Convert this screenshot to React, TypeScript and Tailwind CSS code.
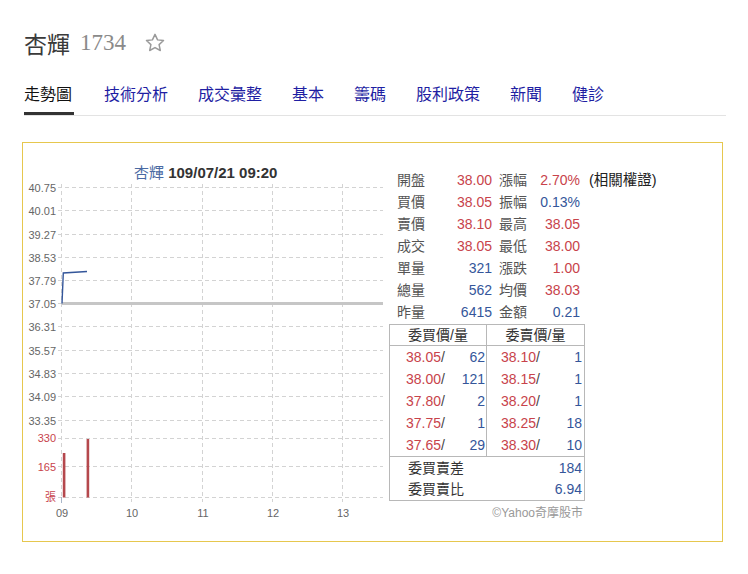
import React from "react";

const RED = "#c8434b";
const BLUE = "#34569a";

type Cell = [string, string, "r" | "b"];
const info: [Cell, Cell][] = [
  [["開盤", "38.00", "r"], ["漲幅", "2.70%", "r"]],
  [["買價", "38.05", "r"], ["振幅", "0.13%", "b"]],
  [["賣價", "38.10", "r"], ["最高", "38.05", "r"]],
  [["成交", "38.05", "r"], ["最低", "38.00", "r"]],
  [["單量", "321", "b"], ["漲跌", "1.00", "r"]],
  [["總量", "562", "b"], ["均價", "38.03", "r"]],
  [["昨量", "6415", "b"], ["金額", "0.21", "b"]],
];

const bids = [
  ["38.05", "62"],
  ["38.00", "121"],
  ["37.80", "2"],
  ["37.75", "1"],
  ["37.65", "29"],
];
const asks = [
  ["38.10", "1"],
  ["38.15", "1"],
  ["38.20", "1"],
  ["38.25", "18"],
  ["38.30", "10"],
];

const tabs = ["走勢圖", "技術分析", "成交彙整", "基本", "籌碼", "股利政策", "新聞", "健診"];

const priceLabels = ["40.75", "40.01", "39.27", "38.53", "37.79", "37.05", "36.31", "35.57", "34.83", "34.09", "33.35"];
const priceYs = [187.5, 210.5, 234.5, 257.5, 280.5, 303.5, 326.5, 350.5, 373.5, 396.5, 420.5];
const volLines = [438.5, 466.5, 497.5];
const vxs = [61.5, 131.5, 202.5, 272.5, 342.5];
const xLabels = ["09", "10", "11", "12", "13"];

function Chart() {
  return (
    <svg width={366} height={398} viewBox="23 143 366 398" className="block shrink-0">
      <text x={134} y={177.5} fontSize={15} fontFamily="'Liberation Sans','Noto Sans CJK TC',sans-serif">
        <tspan fill="#4a6aa3">杏輝</tspan>
        <tspan fill="#333" fontWeight="bold" fontSize={15}> 109/07/21 09:20</tspan>
      </text>
      {[...priceYs, ...volLines].map((y, i) => (
        <line key={"h" + i} x1={58} x2={383} y1={y} y2={y} stroke="#d3d3d3" strokeWidth={1} strokeDasharray="4 3" />
      ))}
      {vxs.map((x, i) => (
        <line key={"v" + i} x1={x} x2={x} y1={184} y2={502} stroke="#d3d3d3" strokeWidth={1} strokeDasharray="4 3" />
      ))}
      <line x1={61.5} x2={61.5} y1={497} y2={503} stroke="#a9b6c8" strokeWidth={1} />
      {priceLabels.map((t, i) => (
        <text key={"pl" + i} x={56} y={priceYs[i] + 4} fontSize={11} fill="#666" textAnchor="end" fontFamily="'Liberation Sans',sans-serif">
          {t}
        </text>
      ))}
      <text x={56} y={442} fontSize={11} fill={RED} textAnchor="end" fontFamily="'Liberation Sans',sans-serif">330</text>
      <text x={56} y={470.5} fontSize={11} fill={RED} textAnchor="end" fontFamily="'Liberation Sans',sans-serif">165</text>
      <text x={56} y={501} fontSize={11} fill={RED} textAnchor="end" fontFamily="'Noto Sans CJK TC',sans-serif">張</text>
      {xLabels.map((t, i) => (
        <text key={"xl" + i} x={vxs[i] + 0.5} y={516.5} fontSize={11} fill="#666" textAnchor="middle" fontFamily="'Liberation Sans',sans-serif">
          {t}
        </text>
      ))}
      <line x1={62} x2={383} y1={303.5} y2={303.5} stroke="#c6c6c6" strokeWidth={3} />
      <polyline points="62,303.5 63.3,273 87,271.5" fill="none" stroke={BLUE} strokeWidth={1.4} />
      <rect x={62.8} y={453} width={2.6} height={44.5} fill="#b5484d" />
      <rect x={86.6} y={439} width={2.6} height={58.5} fill="#b5484d" />
    </svg>
  );
}

function Star() {
  return (
    <svg width={22} height={22} viewBox="0 0 24 24" className="block">
      <path
        d="M12 2.6l2.8 6 6.5.7-4.85 4.45 1.35 6.45L12 17l-5.8 3.2 1.35-6.45L2.7 9.3l6.5-.7z"
        fill="none"
        stroke="#9a9a9a"
        strokeWidth={1.6}
        strokeLinejoin="round"
      />
    </svg>
  );
}

export default function App() {
  const col = (c: "r" | "b") => (c === "r" ? "text-[#c8434b]" : "text-[#34569a]");
  return (
    <div
      className="w-[748px] h-[574px] bg-white pl-[22px] overflow-hidden"
      style={{ fontFamily: "'Liberation Sans','Noto Sans CJK TC',sans-serif" }}
    >
      <div className="ml-[2px] pt-[28px] h-[58px] flex items-center">
        <span className="text-[23px] leading-[30px] text-[#3a3a3a] font-['Noto_Sans_CJK_TC',sans-serif]">杏輝</span>
        <span className="ml-[10px] text-[23px] leading-[30px] text-[#8a8a8a] font-['Liberation_Serif',serif]">1734</span>
        <span className="ml-[18px]">
          <Star />
        </span>
      </div>
      <div className="ml-[2px] mt-[22px] w-[702px] h-[36px] flex gap-[30px] border-b border-[#e3e3e3]">
        {tabs.map((t, i) => (
          <div
            key={t}
            className={
              "h-[35px] pt-[3px] text-[16px] leading-[24px] " +
              (i === 0 ? "text-[#111] border-b-[3px] border-[#333] w-[50px]" : "text-[#1f1fa3]")
            }
          >
            {t}
          </div>
        ))}
      </div>
      <div className="mt-[26px] w-[701px] h-[400px] border border-[#e6c74e] flex">
        <Chart />
        <div className="pt-[26px] flex flex-col">
          <div className="pl-[8px] flex flex-col">
            {info.map((row, i) => (
              <div key={i} className="h-[22px] flex items-center text-[14px] leading-[22px]">
                <span className="w-[28px] text-[#555]">{row[0][0]}</span>
                <span className={"w-[67px] text-right " + col(row[0][2])}>{row[0][1]}</span>
                <span className="w-[35px] pl-[7px] text-[#555]">{row[1][0]}</span>
                <span className={"w-[53px] text-right " + col(row[1][2])}>{row[1][1]}</span>
                {i === 0 && <span className="ml-[9px] text-[14.5px] text-[#222]">(相關權證)</span>}
              </div>
            ))}
          </div>
          <div className="mt-[1px] w-[196px] border border-[#b8b8b8] text-[14px]">
            <div className="flex h-[21px] border-b border-[#b8b8b8] text-[#333]">
              <div className="w-[97px] border-r border-[#b8b8b8] flex items-center justify-center leading-[20px]">委買價/量</div>
              <div className="flex-1 flex items-center justify-center leading-[20px]">委賣價/量</div>
            </div>
            <div className="flex border-b border-[#b8b8b8]">
              <div className="w-[97px] border-r border-[#b8b8b8] flex flex-col">
                {bids.map(([p, q]) => (
                  <div key={p} className="h-[22px] flex items-center pl-[16px] pr-[1px]">
                    <span className="text-[#c8434b]">{p}</span>
                    <span className="text-[#444]">/</span>
                    <span className="flex-1 text-right text-[#34569a]">{q}</span>
                  </div>
                ))}
              </div>
              <div className="flex-1 flex flex-col">
                {asks.map(([p, q]) => (
                  <div key={p} className="h-[22px] flex items-center pl-[14px] pr-[2px]">
                    <span className="text-[#c8434b]">{p}</span>
                    <span className="text-[#444]">/</span>
                    <span className="flex-1 text-right text-[#34569a]">{q}</span>
                  </div>
                ))}
              </div>
            </div>
            <div className="h-[21px] flex items-center pl-[18px] pr-[2px] pt-[1px]">
              <span className="text-[#333]">委買賣差</span>
              <span className="flex-1 text-right text-[#34569a]">184</span>
            </div>
            <div className="h-[22px] flex items-center pl-[18px] pr-[2px]">
              <span className="text-[#333]">委買賣比</span>
              <span className="flex-1 text-right text-[#34569a]">6.94</span>
            </div>
          </div>
          <div className="w-[196px] mt-[4px] pr-[2px] text-right text-[12px] leading-[16px] text-[#999]">©Yahoo奇摩股市</div>
        </div>
      </div>
    </div>
  );
}
